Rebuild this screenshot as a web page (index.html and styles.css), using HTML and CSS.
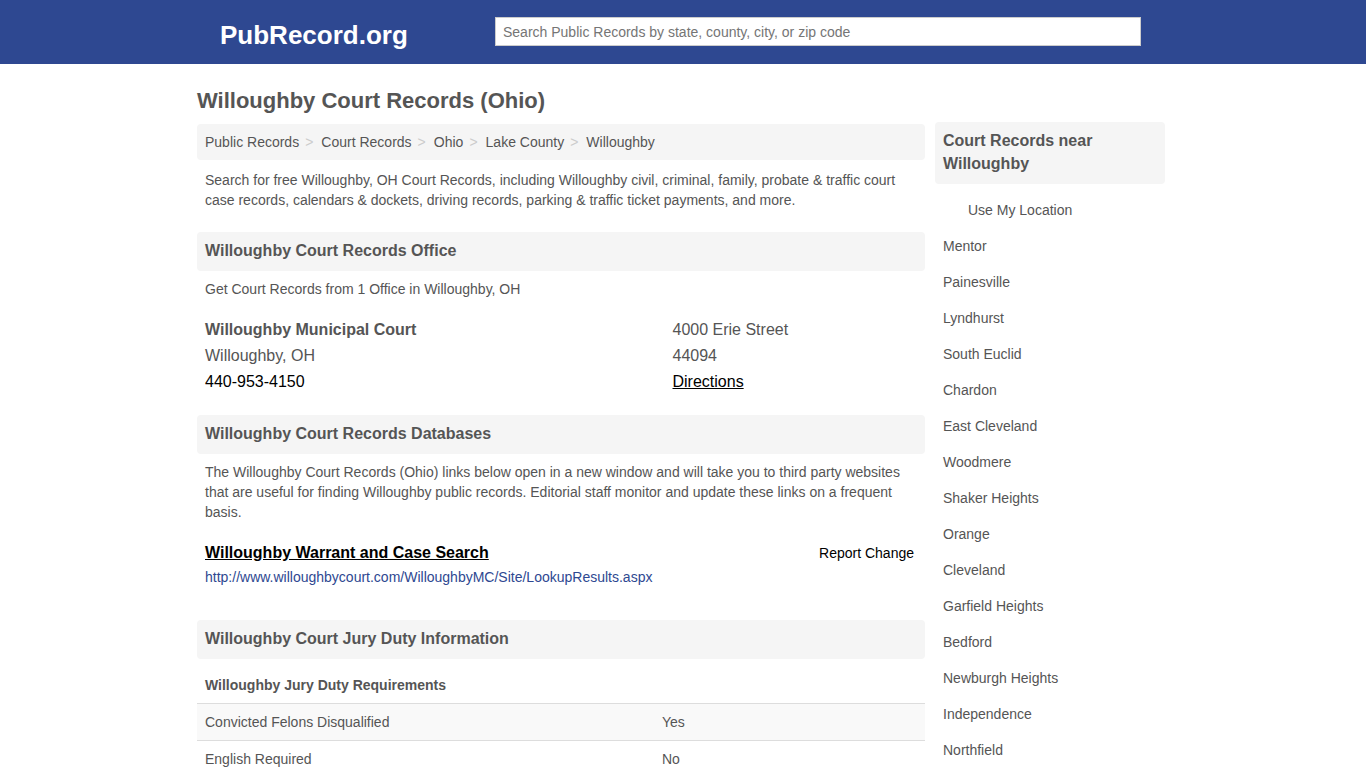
FILE: index.html
```html
<!DOCTYPE html>
<html lang="en">
<head>
    <meta charset="UTF-8">
    <meta name="viewport" content="width=device-width, initial-scale=1.0">
    <title>Willoughby Court Records (Ohio)</title>
    <link rel="stylesheet" href="styles.css">
</head>
<body>
    <header class="topbar">
        <div class="topbar-inner">
            <a class="logo" href="#">PubRecord.org</a>
            <input class="search" type="text" placeholder="Search Public Records by state, county, city, or zip code">
        </div>
    </header>

    <div class="page">
        <main class="main">
            <h1>Willoughby Court Records (Ohio)</h1>
            <ul class="crumbs">
                <li><a href="#">Public Records</a></li>
                <li><a href="#">Court Records</a></li>
                <li><a href="#">Ohio</a></li>
                <li><a href="#">Lake County</a></li>
                <li><a href="#">Willoughby</a></li>
            </ul>
            <p class="text intro">Search for free Willoughby, OH Court Records, including Willoughby civil, criminal, family, probate &amp; traffic court case records, calendars &amp; dockets, driving records, parking &amp; traffic ticket payments, and more.</p>

            <h2 class="section-title">Willoughby Court Records Office</h2>
            <p class="text office-count">Get Court Records from 1 Office in Willoughby, OH</p>
            <div class="office">
                <div class="office-col office-left">
                    <strong>Willoughby Municipal Court</strong>
                    <span>Willoughby, OH</span>
                    <a class="phone" href="#">440-953-4150</a>
                </div>
                <div class="office-col">
                    <span>4000 Erie Street</span>
                    <span>44094</span>
                    <a class="directions" href="#">Directions</a>
                </div>
            </div>

            <h2 class="section-title">Willoughby Court Records Databases</h2>
            <p class="text">The Willoughby Court Records (Ohio) links below open in a new window and will take you to third party websites that are useful for finding Willoughby public records. Editorial staff monitor and update these links on a frequent basis.</p>
            <div class="db-item">
                <div class="db-head">
                    <a class="db-name" href="#">Willoughby Warrant and Case Search</a>
                    <a class="report" href="#">Report Change</a>
                </div>
                <a class="db-url" href="#">http://www.willoughbycourt.com/WilloughbyMC/Site/LookupResults.aspx</a>
            </div>

            <h2 class="section-title">Willoughby Court Jury Duty Information</h2>
            <h3 class="table-title">Willoughby Jury Duty Requirements</h3>
            <table class="jury">
                <tr class="odd"><td class="jury-label">Convicted Felons Disqualified</td><td>Yes</td></tr>
                <tr><td class="jury-label">English Required</td><td>No</td></tr>
            </table>
        </main>

        <aside class="side">
            <h2 class="side-title">Court Records near Willoughby</h2>
            <ul class="near">
                <li class="locate"><a href="#">Use My Location</a></li>
                <li><a href="#">Mentor</a></li>
                <li><a href="#">Painesville</a></li>
                <li><a href="#">Lyndhurst</a></li>
                <li><a href="#">South Euclid</a></li>
                <li><a href="#">Chardon</a></li>
                <li><a href="#">East Cleveland</a></li>
                <li><a href="#">Woodmere</a></li>
                <li><a href="#">Shaker Heights</a></li>
                <li><a href="#">Orange</a></li>
                <li><a href="#">Cleveland</a></li>
                <li><a href="#">Garfield Heights</a></li>
                <li><a href="#">Bedford</a></li>
                <li><a href="#">Newburgh Heights</a></li>
                <li><a href="#">Independence</a></li>
                <li><a href="#">Northfield</a></li>
            </ul>
        </aside>
    </div>
</body>
</html>
```

FILE: styles.css
```css
* {
    margin: 0;
    padding: 0;
    box-sizing: border-box;
}
html, body {
    height: 768px;
    overflow: hidden;
}
body {
    background-color: #fff;
    color: #555;
    font-family: "Liberation Sans", Arial, sans-serif;
    font-size: 14px;
    line-height: 20px;
}
a {
    color: inherit;
    text-decoration: none;
}
ul {
    list-style: none;
}
.topbar {
    height: 64px;
    background-color: #2e4891;
}
.topbar-inner {
    width: 1000px;
    margin: 0 auto;
    display: flex;
    align-items: flex-start;
}
.logo {
    width: 312px;
    padding: 19px 0 0 37px;
    color: #fff;
    font-size: 26px;
    line-height: 32px;
    font-weight: bold;
}
.search {
    width: 646px;
    height: 29px;
    margin-top: 17px;
    padding: 0 7px;
    border: 1px solid #ccc;
    background-color: #fff;
    font-family: inherit;
    font-size: 14px;
    color: #555;
}
.search::placeholder {
    color: #757575;
    opacity: 1;
}
.page {
    width: 968px;
    margin-left: 197px;
    display: flex;
    gap: 10px;
    align-items: flex-start;
}
.main {
    width: 728px;
}
h1 {
    margin-top: 22px;
    font-size: 22px;
    line-height: 30px;
    font-weight: bold;
}
.crumbs {
    display: flex;
    height: 36px;
    margin-top: 8px;
    padding: 0 8px;
    align-items: center;
    background-color: #f5f5f5;
    border-radius: 4px;
}
.crumbs li + li::before {
    content: ">";
    padding: 0 8px 0 6px;
    color: #ccc;
}
.text {
    padding: 0 8px;
}
.intro {
    margin-top: 10px;
}
.section-title {
    height: 39px;
    margin-top: 22px;
    padding: 0 8px;
    background-color: #f5f5f5;
    border-radius: 4px;
    font-size: 16px;
    line-height: 37px;
    font-weight: bold;
}
.section-title + .text {
    margin-top: 8px;
}
.office {
    display: flex;
    margin-top: 18px;
    padding: 0 8px;
    font-size: 16px;
    line-height: 26px;
}
.office + .section-title {
    margin-top: 20px;
}
.office-col {
    display: flex;
    flex-direction: column;
    align-items: flex-start;
}
.office-left {
    width: 467.5px;
}
.phone {
    color: #000;
}
.directions {
    color: #000;
    text-decoration: underline;
}
.db-item {
    margin-top: 21px;
    padding: 0 11px 0 8px;
}
.db-head {
    display: flex;
    justify-content: space-between;
    align-items: center;
    height: 20px;
}
.db-name {
    color: #000;
    font-size: 16px;
    font-weight: bold;
    text-decoration: underline;
}
.report {
    color: #000;
}
.db-url {
    display: block;
    margin-top: 4px;
    color: #2e4891;
}
.db-item + .section-title {
    margin-top: 33px;
}
.table-title {
    margin-top: 16px;
    padding: 0 8px;
    font-size: 14px;
    line-height: 20px;
    font-weight: bold;
}
.jury {
    width: 100%;
    margin-top: 8px;
    border-collapse: collapse;
}
.jury td {
    height: 37px;
    padding: 0 8px;
    border-top: 1px solid #ddd;
}
.jury-label {
    width: 457px;
}
.odd {
    background-color: #f9f9f9;
}
.side {
    width: 230px;
    margin-top: 58px;
}
.side-title {
    padding: 7px 8px 9px;
    background-color: #f5f5f5;
    border-radius: 4px;
    font-size: 16px;
    line-height: 23px;
    font-weight: bold;
}
.near {
    margin-top: 8px;
    padding: 0 8px;
}
.near li {
    height: 36px;
    line-height: 36px;
}
.locate {
    padding-left: 25px;
}
```
